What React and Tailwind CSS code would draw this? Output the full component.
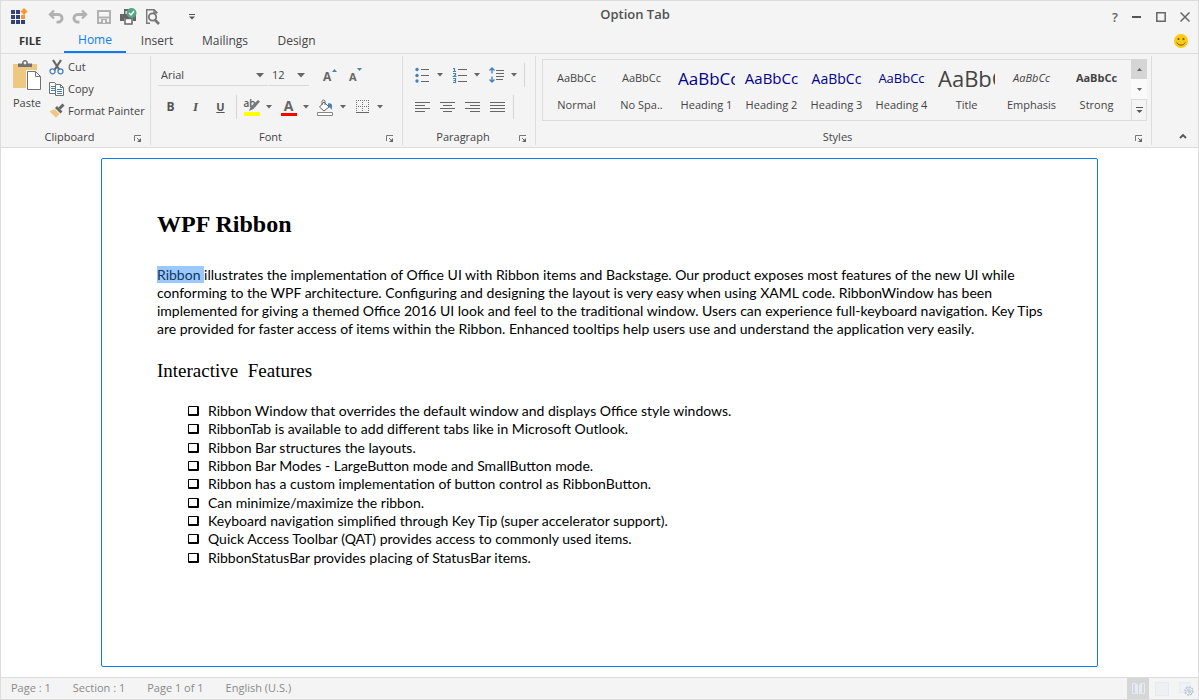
import React from "react";

const lines = [
  "illustrates the implementation of Office UI with Ribbon items and Backstage. Our product exposes most features of the new UI while",
  "conforming to the WPF architecture. Configuring and designing the layout is very easy when using XAML code. RibbonWindow has been",
  "implemented for giving a themed Office 2016 UI look and feel to the traditional window. Users can experience full-keyboard navigation. Key Tips",
  "are provided for faster access of items within the Ribbon. Enhanced tooltips help users use and understand the application very easily.",
];

const features = [
  "Ribbon Window that overrides the default window and displays Office style windows.",
  "RibbonTab is available to add different tabs like in Microsoft Outlook.",
  "Ribbon Bar structures the layouts.",
  "Ribbon Bar Modes - LargeButton mode and SmallButton mode.",
  "Ribbon has a custom implementation of button control as RibbonButton.",
  "Can minimize/maximize the ribbon.",
  "Keyboard navigation simplified through Key Tip (super accelerator support).",
  "Quick Access Toolbar (QAT) provides access to commonly used items.",
  "RibbonStatusBar provides placing of StatusBar items.",
];

const styles = [
  { name: "Normal", look: "text-[11px]" },
  { name: "No Spa..", look: "text-[11px]" },
  { name: "Heading 1", look: "text-[17px] text-[#00008b]" },
  { name: "Heading 2", look: "text-[15px] text-[#00008b]" },
  { name: "Heading 3", look: "text-[14px] text-[#00008b]" },
  { name: "Heading 4", look: "text-[13px] text-[#00008b]" },
  { name: "Title", look: "text-[22px]" },
  { name: "Emphasis", look: "text-[11px] italic" },
  { name: "Strong", look: "text-[11px] font-bold" },
];

function Svg({ w = 16, h = 16, children, className = "" }) {
  return (
    <svg width={w} height={h} viewBox={`0 0 ${w} ${h}`} fill="none" aria-hidden="true" className={`shrink-0 ${className}`}>
      {children}
    </svg>
  );
}

function Arrow({ className = "" }) {
  return (
    <Svg w={6} h={4} className={className}>
      <path d="M0 0h6L3 3.5z" fill="#666" />
    </Svg>
  );
}

function Undo({ flip = false }) {
  return (
    <Svg w={16} h={16}>
      <g transform={flip ? "matrix(-1 0 0 1 16 0)" : undefined} stroke="#b1b1b1">
        <path d="M6 1.500 2 5.500l4 4" strokeWidth="2.4" />
        <path d="M2 5.500h8.300a3.800 3.800 0 0 1 0 7.600H8.500" strokeWidth="2.800" />
      </g>
    </Svg>
  );
}

function Logo() {
  return (
    <Svg w={17} h={17}>
      <path fill="#34417f" d="M0 2h4v4H0zM5 2h4v4H5zM0 7h4v4H0zM5 7h4v4H5zM0 12h4v4H0zM5 12h4v4H5zM10 12h4v4h-4z" />
      <path fill="#fa9632" d="m13 0 3.500 3.500L13 7 9.500 3.500zM10 7h4v4h-4z" />
    </Svg>
  );
}

function SaveIcon() {
  return (
    <Svg>
      <path d="M2 2h12v12H2z" stroke="#b1b1b1" strokeWidth="2" />
      <path d="M3 7.500h10v2H3zM5 10h6v4H5z" fill="#b1b1b1" />
      <path d="M7 11h2v3H7z" fill="#f4f4f4" />
    </Svg>
  );
}

function PrintIcon() {
  return (
    <Svg w={17} h={17}>
      <path d="M4 1h6v2H5.500v3H4zM0 6h16v7h-3v-3H4v3H0z" fill="#666" />
      <path d="M5 10.500h7V16H5z" stroke="#666" strokeWidth="1.500" fill="#fff" />
      <circle cx="11.500" cy="5" r="5" fill="#55a684" />
      <path d="m9 5 2 2 3-4" stroke="#fff" strokeWidth="1.400" />
    </Svg>
  );
}

function PreviewIcon() {
  return (
    <Svg w={16} h={17}>
      <path d="M5 15.300H1.700V1.700H9L12.500 5M9 1v4h3" stroke="#777" strokeWidth="1.400" />
      <circle cx="7.500" cy="9" r="3.700" stroke="#777" strokeWidth="1.800" />
      <path d="m10 12 4 4" stroke="#777" strokeWidth="2.600" />
    </Svg>
  );
}

function PasteIcon() {
  return (
    <Svg w={28} h={31}>
      <path d="M0 4h24v24H0z" fill="#eec780" />
      <path d="M5 7V3.500h4C9 1.200 10.200 0 12 0s3 1.200 3 3.500h4V7z" fill="#727272" />
      <circle cx="12" cy="3" r="1.400" fill="#f4f4f4" />
      <path d="M13 10h10l5 5v16H13z" fill="#f4f4f4" />
      <path d="M14.500 11.500h8l5 5v13h-13z" fill="#fff" stroke="#727272" />
      <path d="M22.500 11.500v5h5" stroke="#727272" />
    </Svg>
  );
}

function CutIcon() {
  return (
    <Svg>
      <path d="m4 1 6.500 10M12 1 5.500 11" stroke="#666" strokeWidth="2.200" />
      <circle cx="3.500" cy="12.300" r="2.500" stroke="#4682b8" strokeWidth="1.300" />
      <circle cx="11.500" cy="12.300" r="2.500" stroke="#4682b8" strokeWidth="1.300" />
    </Svg>
  );
}

function CopyIcon() {
  return (
    <Svg>
      <path d="M.5 1.500h5l3 3v8h-8z" fill="#fff" stroke="#727272" />
      <path d="M2 5.500h4M2 7.500h4M2 9.500h4" stroke="#4682b8" />
      <path d="M6.500 3.500h5l3 3v8h-8z" fill="#fff" stroke="#727272" />
      <path d="M11.500 3.500v3h3" stroke="#727272" />
      <path d="M8 8.500h5M8 10.500h5M8 12.500h5" stroke="#4682b8" />
    </Svg>
  );
}

function PainterIcon() {
  return (
    <Svg>
      <path d="M5.500 6 .5 8.500 7 14.500l3.500-3.500z" fill="#eec780" />
      <path d="M6 5 8 3l5.500 5.500-2 2z" fill="#666" />
      <path d="m10.500 5.500 4-4" stroke="#666" strokeWidth="3" />
    </Svg>
  );
}

function Launcher({ name }) {
  return (
    <button type="button" aria-label={`${name} settings`} className="absolute right-2 bottom-0.5">
      <Svg w={9} h={9}>
        <path d="M1.500 7V1.500H8M4 4l3 3" stroke="#777" />
        <path d="M8 4v4H4z" fill="#666" />
      </Svg>
    </button>
  );
}

function Group({ name, className = "", launcher = true, children }) {
  return (
    <section aria-label={name} className={`relative flex flex-col border-r border-[#dcdcdc] ${className}`}>
      <div className="flex-1">{children}</div>
      <h2 className="text-center leading-4">{name}</h2>
      {launcher && <Launcher name={name} />}
    </section>
  );
}

function SplitButton({ label, children }) {
  return (
    <button type="button" aria-label={label} className="flex h-6 w-[37px] items-center gap-1.5">
      <span className="flex w-[17px] justify-center">{children}</span>
      <Arrow />
    </button>
  );
}

function AlignIcon({ kind }) {
  const paths = {
    left: "M0 .5h15M0 3.500h10M0 6.500h15M0 9.500h10",
    center: "M0 .5h15M3 3.500h9M0 6.500h15M3 9.500h9",
    right: "M0 .5h15M5 3.500h10M0 6.500h15M5 9.500h10",
    justify: "M0 .5h15M0 3.500h15M0 6.500h15M0 9.500h15",
  };
  return (
    <Svg w={15} h={10}>
      <path d={paths[kind]} stroke="#666" />
    </Svg>
  );
}

function TitleBar() {
  return (
    <header className="flex h-[27px] items-center">
      <div className="flex w-[200px] items-center gap-2 pt-1 pl-2.5">
        <Logo />
        <div className="flex items-center gap-2 pl-3">
          <button type="button" aria-label="Undo"><Undo /></button>
          <button type="button" aria-label="Redo"><Undo flip /></button>
          <button type="button" aria-label="Save"><SaveIcon /></button>
          <button type="button" aria-label="Print"><PrintIcon /></button>
          <button type="button" aria-label="Print preview"><PreviewIcon /></button>
        </div>
        <button type="button" aria-label="Customize toolbar" className="ml-5">
          <Svg w={6} h={6}>
            <path d="M0 .5h6" stroke="#555" />
            <path d="M0 2.500h6l-3 3z" fill="#555" />
          </Svg>
        </button>
      </div>
      <h1 className="flex-1 text-center text-[13px] font-semibold text-[#505050]">Option Tab</h1>
      <div className="flex w-[129px] items-center justify-end gap-3.5 pt-1 pr-2">
        <button type="button" aria-label="Help" className="text-[13px] leading-4 font-semibold text-[#666]">?</button>
        <button type="button" aria-label="Minimize">
          <Svg w={10} h={10}><path d="M0 5h9" stroke="#555" strokeWidth="2" /></Svg>
        </button>
        <button type="button" aria-label="Maximize">
          <Svg w={10} h={10}><path d="M.8.8h8.400v8.400H.8z" stroke="#666" strokeWidth="1.500" /></Svg>
        </button>
        <button type="button" aria-label="Close">
          <Svg w={10} h={10}><path d="m.5.5 9 9m0-9-9 9" stroke="#666" strokeWidth="1.500" /></Svg>
        </button>
      </div>
    </header>
  );
}

function Tabs() {
  return (
    <nav aria-label="Ribbon tabs" className="flex h-[25px] items-center text-[12px]">
      <a href="#file" className="w-[63px] pt-0.5 pl-[18px] text-[11px] font-bold text-[#333]">FILE</a>
      <a href="#home" aria-current="page" className="flex h-full w-[62px] justify-center border-b-2 border-[#0a7cf5] leading-[23px] text-[#0a7cf5]">Home</a>
      <a href="#insert" className="w-[62px] text-center">Insert</a>
      <a href="#mailings" className="w-[74px] text-center">Mailings</a>
      <a href="#design" className="w-[69px] text-center">Design</a>
      <button type="button" aria-label="Feedback" className="mr-2.5 ml-auto">
        <Svg w={14} h={14}>
          <circle cx="7" cy="7" r="7" fill="#fdca10" />
          <circle cx="4.500" cy="5" r="1.100" fill="#66551d" />
          <circle cx="9.500" cy="5" r="1.100" fill="#66551d" />
          <path d="M2.800 8.500C4.500 12 9.500 12 11.200 8.500" stroke="#66551d" />
        </Svg>
      </button>
    </nav>
  );
}

function Clipboard() {
  return (
    <Group name="Clipboard" className="w-[150px] [&>h2]:pr-3">
      <div className="flex">
        <button type="button" className="flex w-12 flex-col items-center gap-1 pt-1 pl-1 leading-4">
          <PasteIcon />
          Paste
        </button>
        <div className="flex flex-col">
          <button type="button" className="flex h-[22px] items-center gap-[3px]"><CutIcon />Cut</button>
          <button type="button" className="flex h-[22px] items-center gap-[3px]"><CopyIcon />Copy</button>
          <button type="button" className="flex h-[22px] items-center gap-[3px] whitespace-nowrap"><PainterIcon />Format Painter</button>
        </div>
      </div>
    </Group>
  );
}

function Picker({ label, value, className }) {
  return (
    <div className={`relative border-b border-[#d8d8d8] ${className}`}>
      <select aria-label={label} className="h-5 w-full appearance-none bg-transparent pl-[3px] outline-none">
        <option>{value}</option>
      </select>
      <Svg w={8} h={5} className="pointer-events-none absolute top-2 right-1">
        <path d="M0 0h8L4 4.500z" fill="#666" />
      </Svg>
    </div>
  );
}

function FontGroup() {
  return (
    <Group name="Font" className="w-[252px] [&>h2]:pr-3">
      <div className="flex items-start pt-[9px] pl-[7px]">
        <Picker label="Font family" value="Arial" className="w-[110px]" />
        <Picker label="Font size" value="12" className="ml-px w-10" />
        <button type="button" aria-label="Grow font" className="relative ml-3.5 h-5 w-[14px] pt-1 text-left text-[12px] leading-4 font-bold text-[#666]">
          A<Svg w={5} h={3} className="absolute top-1 right-0"><path d="M0 3h5L2.500 0z" fill="#4682b8" /></Svg>
        </button>
        <button type="button" aria-label="Shrink font" className="relative ml-3 h-5 w-[13px] pt-1 text-left text-[11px] leading-4 font-bold text-[#666]">
          A<Svg w={5} h={3} className="absolute top-[3px] right-0"><path d="M0 0h5L2.500 3z" fill="#4682b8" /></Svg>
        </button>
      </div>
      <div className="flex items-center pt-[9px] pl-[7px]">
        <button type="button" aria-label="Bold" className="w-[25px] text-[12px] font-bold text-[#555]">B</button>
        <button type="button" aria-label="Italic" className="w-[25px] font-['Liberation_Serif',serif] text-[13px] font-bold italic text-[#555]">I</button>
        <button type="button" aria-label="Underline" className="w-[25px] text-[11px] font-bold text-[#555] underline">U</button>
        <span className="mr-1.5 ml-[3px] h-6 w-px bg-[#d5d5d5]" />
        <SplitButton label="Highlight color">
          <span className="relative flex h-[17px] w-4 flex-col justify-end">
            <span className="absolute -top-1 left-0 text-[10px] leading-4 font-semibold text-[#555]">ab</span>
            <Svg w={17} h={12} className="relative">
              <path d="m14 0 2 1.500L9.500 9 5 11l1.500-4z" fill="#777" />
            </Svg>
            <span className="h-1 w-4 bg-[#ffff00]" />
          </span>
        </SplitButton>
        <SplitButton label="Font color">
          <span className="flex h-[17px] w-4 flex-col items-center justify-end">
            <span className="text-[14px] leading-[14px] font-bold text-[#666]">A</span>
            <span className="h-1 w-4 bg-[#ff0000]" />
          </span>
        </SplitButton>
        <SplitButton label="Shading">
          <Svg w={17} h={17}>
            <path d="M11 4.500c4-1 5 2 3.500 6.500-1-2-1.500-3-3.500-3z" fill="#4682b8" />
            <path d="m7 3 5 5-5 4-4.500-4z" fill="#fff" stroke="#666" />
            <path d="M5 6V2.500C5 .5 8 .5 8 2.500V6" stroke="#666" />
            <path d="M.5 13.500h15v3H.5z" fill="#fff" stroke="#888" />
          </Svg>
        </SplitButton>
        <SplitButton label="Borders">
          <Svg w={14} h={14}>
            <path d="M0 .5h13M0 6.500h13M.5 0v13M6.500 0v13M12.500 0v13" stroke="#777" strokeDasharray="1 1" />
            <path d="M0 12.500h13" stroke="#666" />
          </Svg>
        </SplitButton>
      </div>
    </Group>
  );
}

function ParagraphGroup() {
  return (
    <Group name="Paragraph" className="w-[133px] [&>h2]:pr-3">
      <div className="flex items-center pt-[7px] pl-[11px]">
        <SplitButton label="Bullets">
          <Svg w={15} h={16}>
            <path d="M6 2.500h8M6 8.500h8M6 14.500h8" stroke="#666" />
            <g fill="#4682b8"><circle cx="2" cy="2.500" r="1.700" /><circle cx="2" cy="8.500" r="1.700" /><circle cx="2" cy="14" r="1.700" /></g>
          </Svg>
        </SplitButton>
        <SplitButton label="Numbering">
          <Svg w={16} h={17}>
            <path d="M6 2.500h9M6 8.500h9M6 14.500h9" stroke="#666" />
            <path d="M1 1.500h1.500V5M1 4.500h3M1 6.500h2.500v1.500L1.500 9.500h3M1 11.500h2.500v4H1M1.500 13.500h2" stroke="#4682b8" strokeWidth="1.200" />
          </Svg>
        </SplitButton>
        <SplitButton label="Line spacing">
          <Svg w={15} h={16}>
            <path d="M7 3.500h8M7 6.500h8M7 9.500h8M7 12.500h7" stroke="#666" />
            <path d="M3 1v5.500M.5 3.500 3 1l2.500 2.500M3 9.500V15M.5 12.500 3 15l2.500-2.500" stroke="#4682b8" strokeWidth="1.400" />
          </Svg>
        </SplitButton>
        <span className="-ml-px h-6 w-px bg-[#d5d5d5]" />
      </div>
      <div className="flex items-center gap-2.5 pt-2 pl-3">
        <button type="button" aria-label="Align left"><AlignIcon kind="left" /></button>
        <button type="button" aria-label="Center"><AlignIcon kind="center" /></button>
        <button type="button" aria-label="Align right"><AlignIcon kind="right" /></button>
        <button type="button" aria-label="Justify"><AlignIcon kind="justify" /></button>
        <span className="-ml-0.5 h-6 w-px bg-[#d5d5d5]" />
      </div>
    </Group>
  );
}

function StylesGroup() {
  return (
    <Group name="Styles" className="min-w-0 flex-1 [&>h2]:pr-3">
      <div className="mt-[3px] mr-1 ml-1.5 flex border border-[#dcdcdc]">
        <div className="grid h-[60px] min-w-0 flex-1 grid-cols-9 pr-0.5 pl-px">
          {styles.map((s) => (
            <button key={s.name} type="button" className="flex min-w-0 flex-col items-center px-1">
              <span className={`flex h-[37px] w-full items-center overflow-hidden whitespace-nowrap ${s.look}`}>
                <span className="mx-auto">AaBbCc</span>
              </span>
              <span className="leading-4 whitespace-nowrap">{s.name}</span>
            </button>
          ))}
        </div>
        <div className="-my-px -mr-px flex w-4 flex-col">
          <button type="button" aria-label="Previous styles" className="flex flex-1 items-center justify-center bg-[#d5d5d5]">
            <Svg w={5} h={3}><path d="M0 3h5L2.500 0z" fill="#666" /></Svg>
          </button>
          <button type="button" aria-label="Next styles" className="flex flex-1 items-center justify-center bg-[#fafafa]">
            <Svg w={5} h={3}><path d="M0 0h5L2.500 3z" fill="#666" /></Svg>
          </button>
          <button type="button" aria-label="All styles" className="flex flex-1 items-center justify-center border border-[#dcdcdc]">
            <Svg w={7} h={6}><path d="M0 .5h7" stroke="#555" /><path d="M.5 3h6l-3 3z" fill="#555" /></Svg>
          </button>
        </div>
      </div>
    </Group>
  );
}

function Document() {
  return (
    <main className="flex min-h-0 flex-1 px-[100px] pt-2.5 pb-2.5">
      <article className="flex-1 rounded-xs border border-[#0a7cf5] bg-white pt-[50px] pl-[55px] font-['Lato','Open_Sans',sans-serif] text-[14px] text-black">
        <h2 className="font-['Liberation_Serif',serif] text-2xl leading-[30px] font-bold">WPF Ribbon</h2>
        <p className="pt-[27px] leading-[18px] whitespace-nowrap">
          <mark className="bg-[#99c9ff] text-[#12345e]">Ribbon </mark>
          {lines.map((line) => (
            <React.Fragment key={line}>
              {line}
              <br />
            </React.Fragment>
          ))}
        </p>
        <h3 className="pt-[21px] font-['Liberation_Serif',serif] text-[19px] leading-6 whitespace-pre">Interactive  Features</h3>
        <ul className="mt-[19px] grid h-[165px] auto-rows-fr pl-[31px]">
          {features.map((f) => (
            <li key={f} className="flex items-center leading-[18px]">
              <span className="mr-[9px] h-[10px] w-[11px] rounded-[1px] border border-r-2 border-b-2 border-black" />
              {f}
            </li>
          ))}
        </ul>
      </article>
    </main>
  );
}

function StatusBar() {
  return (
    <footer className="flex h-[22px] items-center border-t border-[#dcdcdc] bg-[#f4f4f4] pl-2.5 text-[#8a8a8a]">
      <div className="flex flex-1 gap-[22px]">
        <span>Page : 1</span>
        <span>Section : 1</span>
        <span>Page 1 of 1</span>
        <span>English (U.S.)</span>
      </div>
      <div className="flex h-full items-center">
        <button type="button" aria-label="Read mode" className="flex h-full w-[22px] items-center justify-center bg-[#d6d6d6]">
          <Svg w={13} h={13}>
            <path d="M.5 1.500h3v10h-3zM9.500 1.500h3v10h-3z" fill="#d3d6de" stroke="#e8ebf1" />
            <path d="M4 1l2 2v10l-2-2zM9 1 7 3v10l2-2z" fill="#e7eaf0" />
          </Svg>
        </button>
        <button type="button" aria-label="Print layout" className="flex w-[26px] justify-center">
          <Svg w={14} h={14}><path d="M.5.500h13v13H.5z" fill="#eef0f4" stroke="#e6e9f0" /></Svg>
        </button>
        <button type="button" aria-label="Web layout" className="flex w-[23px] justify-center">
          <Svg w={15} h={15}>
            <path d="M.5 1.500h11v10H.5z" fill="#f0f1f5" stroke="#e7eaf0" />
            <circle cx="10" cy="10" r="4" stroke="#b7c5dc" strokeWidth="1.500" strokeDasharray="2 1" />
            <path d="M6 10h8M10 6v8M7 7l6 6" stroke="#bdcade" />
          </Svg>
        </button>
      </div>
    </footer>
  );
}

export default function App() {
  return (
    <div className="flex h-screen flex-col border border-[#dcdcdc] bg-white font-['Open_Sans','Noto_Sans',sans-serif] text-[11px] text-[#444]">
      <div className="bg-[#f4f4f4]">
        <TitleBar />
        <Tabs />
        <div className="flex h-[95px] border-y border-[#dcdcdc] py-0.5">
          <Clipboard />
          <FontGroup />
          <ParagraphGroup />
          <StylesGroup />
          <div className="flex w-[46px] items-end justify-center pb-1.5 pl-4">
            <button type="button" aria-label="Collapse ribbon">
              <Svg w={8} h={6}><path d="m1 5 3-3 3 3" stroke="#555" strokeWidth="1.800" /></Svg>
            </button>
          </div>
        </div>
      </div>
      <Document />
      <StatusBar />
    </div>
  );
}
